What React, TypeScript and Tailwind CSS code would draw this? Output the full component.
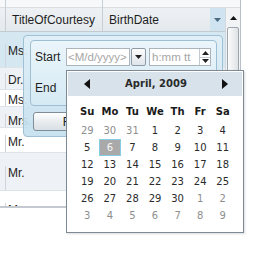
import React from "react";

const rows = [
  { t: "Ms.", cls: "h-[36px] pt-[12px] bg-[#d5e7f1]" },
  { t: "Dr.", cls: "h-[22px] pt-[5px] bg-[#eef2f6]" },
  { t: "Ms.", cls: "h-[17px] pt-[3px] bg-white" },
  { t: "Mrs.", cls: "h-[21px] pt-[7px] bg-[#eef2f6]" },
  { t: "Mr.", cls: "h-[25px] pt-[7px] bg-white" },
  { t: "Mr.", cls: "h-[38px] pt-[13px] bg-[#eef2f6]" },
  { t: "Mr.", cls: "h-[30px] pt-[12px] bg-white" },
];

const weeks: [number, boolean][][] = [
  [[29, false], [30, false], [31, false], [1, true], [2, true], [3, true], [4, true]],
  [[5, true], [6, true], [7, true], [8, true], [9, true], [10, true], [11, true]],
  [[12, true], [13, true], [14, true], [15, true], [16, true], [17, true], [18, true]],
  [[19, true], [20, true], [21, true], [22, true], [23, true], [24, true], [25, true]],
  [[26, true], [27, true], [28, true], [29, true], [30, true], [1, false], [2, false]],
  [[3, false], [4, false], [5, false], [6, false], [7, false], [8, false], [9, false]],
];

const days = ["Su", "Mo", "Tu", "We", "Th", "Fr", "Sa"];

function Down({ c = "#222" }: { c?: string }) {
  return (
    <svg width="7" height="4" viewBox="0 0 7 4">
      <polygon points="0,0 7,0 3.5,4" fill={c} />
    </svg>
  );
}
function Up({ c = "#222" }: { c?: string }) {
  return (
    <svg width="7" height="4" viewBox="0 0 7 4">
      <polygon points="0,4 7,4 3.5,0" fill={c} />
    </svg>
  );
}

export default function App() {
  return (
    <div
      className="relative w-[256px] h-[260px] overflow-hidden bg-white text-[#1e1e1e]"
      style={{ fontFamily: '"Liberation Sans", Arial, sans-serif' }}
    >
      {/* Data grid */}
      <div className="flex w-[241px] h-[208px] border-r border-r-[#b7c0c8] border-b-2 border-b-[#c3c9cf]">
        <div className="flex-1 flex flex-col min-w-0">
          <div className="flex h-[32px] border-b border-[#c3cbd2] bg-[linear-gradient(to_bottom,#f7f8f9_0px,#f7f8f9_7px,#d9dee3_7px,#d9dee3_8px,#eef1f4_8px,#e4e9ed_31px)] text-[12px]">
            <div className="w-[6px] border-r border-[#c6ced6]" />
            <div className="w-[97px] border-r border-[#c6ced6] pt-[8px] pl-[6px] flex items-center">
              TitleOfCourtesy
            </div>
            <div className="flex-1 flex">
              <div className="flex-1 pt-[8px] pl-[6px] flex items-center">BirthDate</div>
              <div className="mt-[8px] w-[15px] h-[23px] bg-[#cfe4f0] flex items-center justify-center">
                <Down c="#4a6a82" />
              </div>
            </div>
          </div>
          <div className="flex-1 overflow-hidden flex flex-col text-[12px]">
            {rows.map((r, i) => (
              <div key={i} className={`flex shrink-0 border-b border-[#dde3e9] ${r.cls}`}>
                <div className="w-[6px] border-r border-[#cdd4db]" />
                <div className="pl-[2px] leading-[14px]">{r.t}</div>
              </div>
            ))}
          </div>
        </div>
        {/* vertical scrollbar */}
        <div className="w-[15px] flex flex-col">
          <div className="h-[8px] bg-[#f7f8f9] border-b border-[#d9dee3]" />
          <div className="flex-1 flex flex-col border-l border-[#d3d8dc] bg-[#f2f3f4]">
            <div className="h-[19px] flex items-center justify-center">
              <Up c="#111" />
            </div>
            <div className="flex-1 mx-[1px] mb-[2px] rounded-[2px] border border-[#9ea7af] bg-[linear-gradient(to_right,#fbfbfb,#dfe2e5)]" />
          </div>
        </div>
      </div>

      {/* Filter panel */}
      <div className="absolute left-[23px] top-[35px] w-[200px] h-[102px] rounded-[4px] border border-[#9fc1d5] bg-[linear-gradient(to_bottom,rgba(226,240,248,0.9),rgba(196,224,238,0.93))]">
        <div className="ml-[6px] mt-[4px] w-[187px] h-[66px] rounded-[4px] border border-[#9dbfd3] bg-[linear-gradient(to_bottom,rgba(236,246,251,0.9),rgba(214,234,244,0.9))] pl-[4px] pt-[7px]">
          <div className="flex items-center h-[18px]">
            <div className="w-[31px] text-[12px]">Start</div>
            <div className="w-[64px] h-[18px] border border-[#abb3bb] bg-white text-[11.5px] leading-[16px] text-[#a6a6a6] pl-[1px] overflow-hidden whitespace-nowrap">
              &lt;M/d/yyyy&gt;
            </div>
            <div className="ml-[1px] w-[15px] h-[18px] rounded-[2px] border border-[#8e9ba6] bg-[linear-gradient(to_bottom,#fdfdfd,#dfe5ea)] flex items-center justify-center">
              <Down />
            </div>
            <div className="ml-[3px] w-[62px] h-[18px] border border-[#abb3bb] bg-white flex">
              <div className="flex-1 text-[11.5px] leading-[16px] text-[#a6a6a6] pl-[2px] overflow-hidden whitespace-nowrap">
                h:mm tt
              </div>
              <div className="w-[11px] flex flex-col border-l border-[#c4cad0]">
                <div className="flex-1 flex items-center justify-center"><Up /></div>
                <div className="flex-1 flex items-center justify-center border-t border-[#c4cad0]"><Down /></div>
              </div>
            </div>
          </div>
          <div className="flex items-center h-[18px] mt-[13px]">
            <div className="w-[31px] text-[12px]">End</div>
          </div>
        </div>
        <div className="ml-[9px] mt-[6px] w-[86px] h-[19px] rounded-[3px] border border-[#7f8d99] bg-[linear-gradient(to_bottom,#ffffff,#e9edf0_50%,#d9dfe4)] flex items-center justify-center text-[12px]">
          Filter
        </div>
      </div>

      {/* Calendar popup */}
      <div
        className="absolute left-[66px] top-[70px] w-[178px] h-[163px] border border-[#7d8995] bg-white shadow-[1px_1px_2px_rgba(0,0,0,0.15)]"
        style={{ fontFamily: '"DejaVu Sans", Verdana, sans-serif' }}
      >
        <div className="mx-[1px] mt-[1px] h-[24px] bg-[#d8e2ea] flex items-center justify-between pl-[16px] pr-[14px]">
          <svg width="6" height="10" viewBox="0 0 6 10">
            <polygon points="6,0 6,10 0,5" fill="#111" />
          </svg>
          <span className="text-[10px] leading-[12px] font-bold text-[#2a2a2a]">April, 2009</span>
          <svg width="6" height="10" viewBox="0 0 6 10">
            <polygon points="0,0 0,10 6,5" fill="#111" />
          </svg>
        </div>
        <div className="px-[9px] mt-[8px]">
          <div className="grid grid-cols-7 h-[16px] text-[10px] leading-[12px] font-bold text-[#1a1a1a]">
            {days.map((d) => (
              <div key={d} className="flex items-center justify-center">{d}</div>
            ))}
          </div>
          <div className="mt-[2px]">
            {weeks.map((w, wi) => (
              <div key={wi} className="grid grid-cols-7 h-[17px] text-[10px] leading-[12px]">
                {w.map(([n, cur], di) => {
                  const today = wi === 1 && di === 1;
                  return (
                    <div
                      key={di}
                      className={
                        today
                          ? "flex items-center justify-center bg-[#a9a9a9] border border-[#86cbe4] text-[#f6f6f6]"
                          : cur
                          ? "flex items-center justify-center text-[#2b2b2b]"
                          : "flex items-center justify-center text-[#8e8e8e]"
                      }
                    >
                      {n}
                    </div>
                  );
                })}
              </div>
            ))}
          </div>
        </div>
      </div>
    </div>
  );
}
